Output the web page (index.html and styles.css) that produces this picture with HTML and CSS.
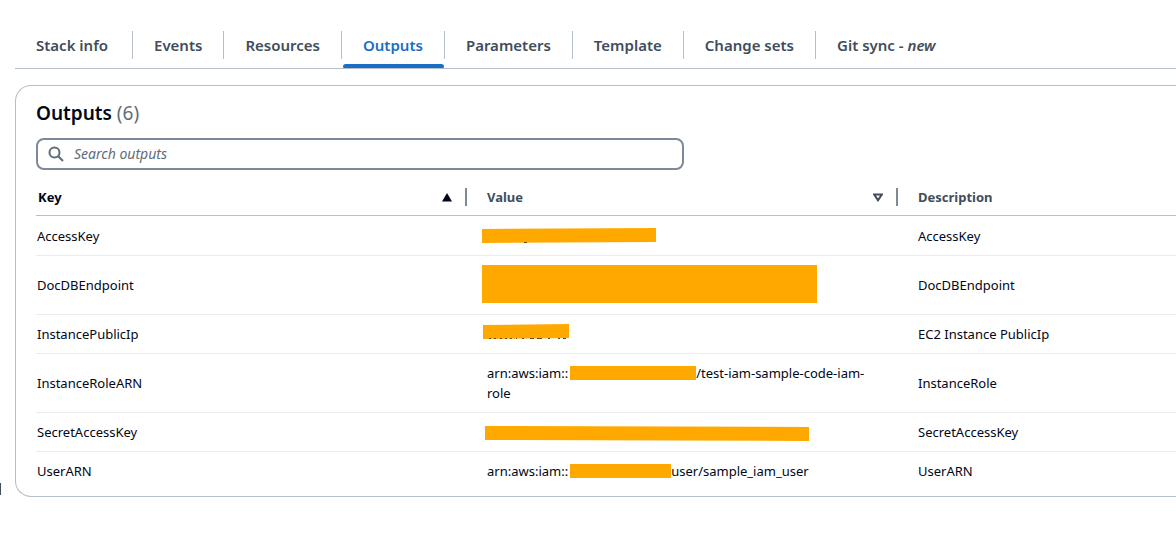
FILE: index.html
```html
<!DOCTYPE html>
<html lang="en">
<head>
<meta charset="utf-8">
<title>Stack outputs</title>
<link rel="stylesheet" href="styles.css">
</head>
<body>
<main class="page">
  <div class="tabs" role="tablist">
    <div class="tab"><button type="button" role="tab">Stack info</button></div>
    <div class="tab"><button type="button" role="tab">Events</button></div>
    <div class="tab"><button type="button" role="tab">Resources</button></div>
    <div class="tab active"><button type="button" role="tab" aria-selected="true">Outputs</button></div>
    <div class="tab"><button type="button" role="tab">Parameters</button></div>
    <div class="tab"><button type="button" role="tab">Template</button></div>
    <div class="tab"><button type="button" role="tab">Change sets</button></div>
    <div class="tab"><button type="button" role="tab">Git sync - <em>new</em></button></div>
  </div>
  <section class="card">
    <h2 class="title">Outputs <span class="count">(6)</span></h2>
    <label class="search">
      <svg class="search-icon" width="16" height="16" viewBox="0 0 16 16" aria-hidden="true"><circle cx="6.5" cy="6.5" r="5" /><path d="M10.2 10.2 15 15" /></svg>
      <input type="search" placeholder="Search outputs" aria-label="Search outputs">
    </label>
    <table class="outputs">
      <colgroup><col class="col"><col class="col"><col></colgroup>
      <thead>
        <tr>
          <th class="sorted"><div class="head">Key <svg width="10" height="9" viewBox="0 0 10 9" aria-hidden="true"><path d="M5 0 10 8.500H0z" fill="#000716"/></svg></div></th>
          <th><div class="head">Value <svg width="10" height="9" viewBox="0 0 10 9" aria-hidden="true"><path d="M1.200 1.500H8.800L5 7.300z" fill="none" stroke="#414d5c" stroke-width="2"/></svg></div></th>
          <th>Description</th>
        </tr>
      </thead>
      <tbody>
        <tr>
          <td>AccessKey</td>
          <td class="masked"><svg class="mask" width="175" height="16" viewBox="0 0 175 16"><path d="M0 1 174 0V14L0 15z"/><path class="trace" d="M42 14.500h3"/></svg></td>
          <td>AccessKey</td>
        </tr>
        <tr>
          <td>DocDBEndpoint</td>
          <td class="masked tall"><svg class="mask" width="336" height="39" viewBox="0 0 336 39"><path d="M0 0H335V38H0z"/></svg></td>
          <td>DocDBEndpoint</td>
        </tr>
        <tr>
          <td>InstancePublicIp</td>
          <td class="masked"><svg class="mask raised" width="88" height="16" viewBox="0 0 88 16"><path d="M1 1 87 0V14L1 15z"/><path class="trace" d="M7 14.500h2m3 0h2m4 0h2m3 0h2m3 0h2m4 0h1m5 0h2m6 0h4m3 0h5m6 0h2m8 0h2m3 0h3"/></svg></td>
          <td>EC2 Instance PublicIp</td>
        </tr>
        <tr>
          <td>InstanceRoleARN</td>
          <td>arn:aws:iam::<span class="bar account"></span>/test-iam-sample-code-iam-<span>role</span></td>
          <td>InstanceRole</td>
        </tr>
        <tr>
          <td>SecretAccessKey</td>
          <td class="masked"><svg class="mask lowered" width="328" height="16" viewBox="0 0 328 16"><path d="M3 0 327 1V15L3 14z"/></svg></td>
          <td>SecretAccessKey</td>
        </tr>
        <tr>
          <td>UserARN</td>
          <td>arn:aws:iam::<span class="bar user"></span>user/sample_iam_user</td>
          <td>UserARN</td>
        </tr>
      </tbody>
    </table>
  </section>
</main>
</body>
</html>
```
FILE: styles.css
```css
* { box-sizing: border-box; }
body {
  margin: 0;
  background: #fff;
  color: #000716;
  font: 13px/20px "Noto Sans", "Open Sans", sans-serif;
  overflow-x: hidden;
}
button, input { font: inherit; color: inherit; }
.page { position: relative; padding: 22px 0 55px 15px; }
.page::before {
  content: "";
  position: absolute;
  left: 0;
  top: 483px;
  width: 1px;
  height: 12px;
  background: #414d5c;
}
.tabs {
  display: flex;
  height: 47px;
  border-bottom: 1px solid #b6bec9;
}
.tab { position: relative; display: flex; align-items: center; }
.tab button {
  border: 0;
  background: none;
  padding: 0 21px;
  color: #414d5c;
  font-size: 15px;
  font-weight: 600;
  white-space: nowrap;
}
.tab:first-child button { padding-right: 24px; }
.tab + .tab::before {
  content: "";
  width: 1px;
  height: 28px;
  background: #b6bec9;
}
.tab.active button { color: #1a6fc4; }
.tab.active::after {
  content: "";
  position: absolute;
  left: 2px;
  right: 0;
  bottom: 0;
  height: 4px;
  border-radius: 4px 4px 2px 2px;
  background: #1a6fc4;
}
.card {
  margin-top: 16px;
  padding: 15px 0 6px 20px;
  border: 1px solid #b6bec9;
  border-right: 0;
  border-radius: 16px 0 0 16px;
}
.title { margin: 0; font-size: 19px; line-height: 24px; font-weight: 600; }
.count { color: #5f6b7a; font-weight: 400; }
.search {
  display: flex;
  align-items: center;
  gap: 10px;
  width: 648px;
  max-width: 100%;
  height: 32px;
  margin-top: 13px;
  padding: 0 10px;
  border: 2px solid #7d8998;
  border-radius: 8px;
}
.search-icon { fill: none; stroke: #5f6b7a; stroke-width: 2; }
.search input {
  flex: 1;
  min-width: 0;
  padding: 0;
  border: 0;
  outline: 0;
  background: none;
  font-size: 14px;
}
.search input::placeholder { color: #5f6b7a; font-style: italic; opacity: 1; }
.outputs {
  width: 100%;
  margin-top: 8px;
  border-collapse: separate;
  border-spacing: 0;
  table-layout: fixed;
}
.col { width: 431px; }
th {
  padding: 9px 0 8px 20px;
  border-bottom: 1px solid #b6bec9;
  color: #414d5c;
  text-align: left;
  font-weight: 700;
}
th.sorted { padding-left: 2px; color: #000716; }
.head {
  display: flex;
  align-items: center;
  justify-content: space-between;
  height: 20px;
  padding-right: 15px;
  background: linear-gradient(#7d8998, #7d8998) right / 2px 18px no-repeat;
}
td {
  padding: 9px 20px;
  border-bottom: 1px solid #e9ebed;
  vertical-align: middle;
}
td:first-child { padding-left: 1px; }
tbody tr:first-child td { padding-top: 10px; }
tbody tr:last-child td { border-bottom: 0; }
.masked { padding-left: 15px; }
.masked.tall { padding-top: 9px; padding-bottom: 10px; }
.mask { display: block; fill: #ffa900; }
.raised { margin-bottom: 4px; }
.lowered { margin-top: 4px; }
.trace { fill: none; stroke: #6b4a10; stroke-width: 1; }
.bar {
  display: inline-block;
  height: 14px;
  margin-left: 2px;
  vertical-align: -2px;
  background: #ffa900;
}
.account { width: 126px; }
.user { width: 101px; }
```
